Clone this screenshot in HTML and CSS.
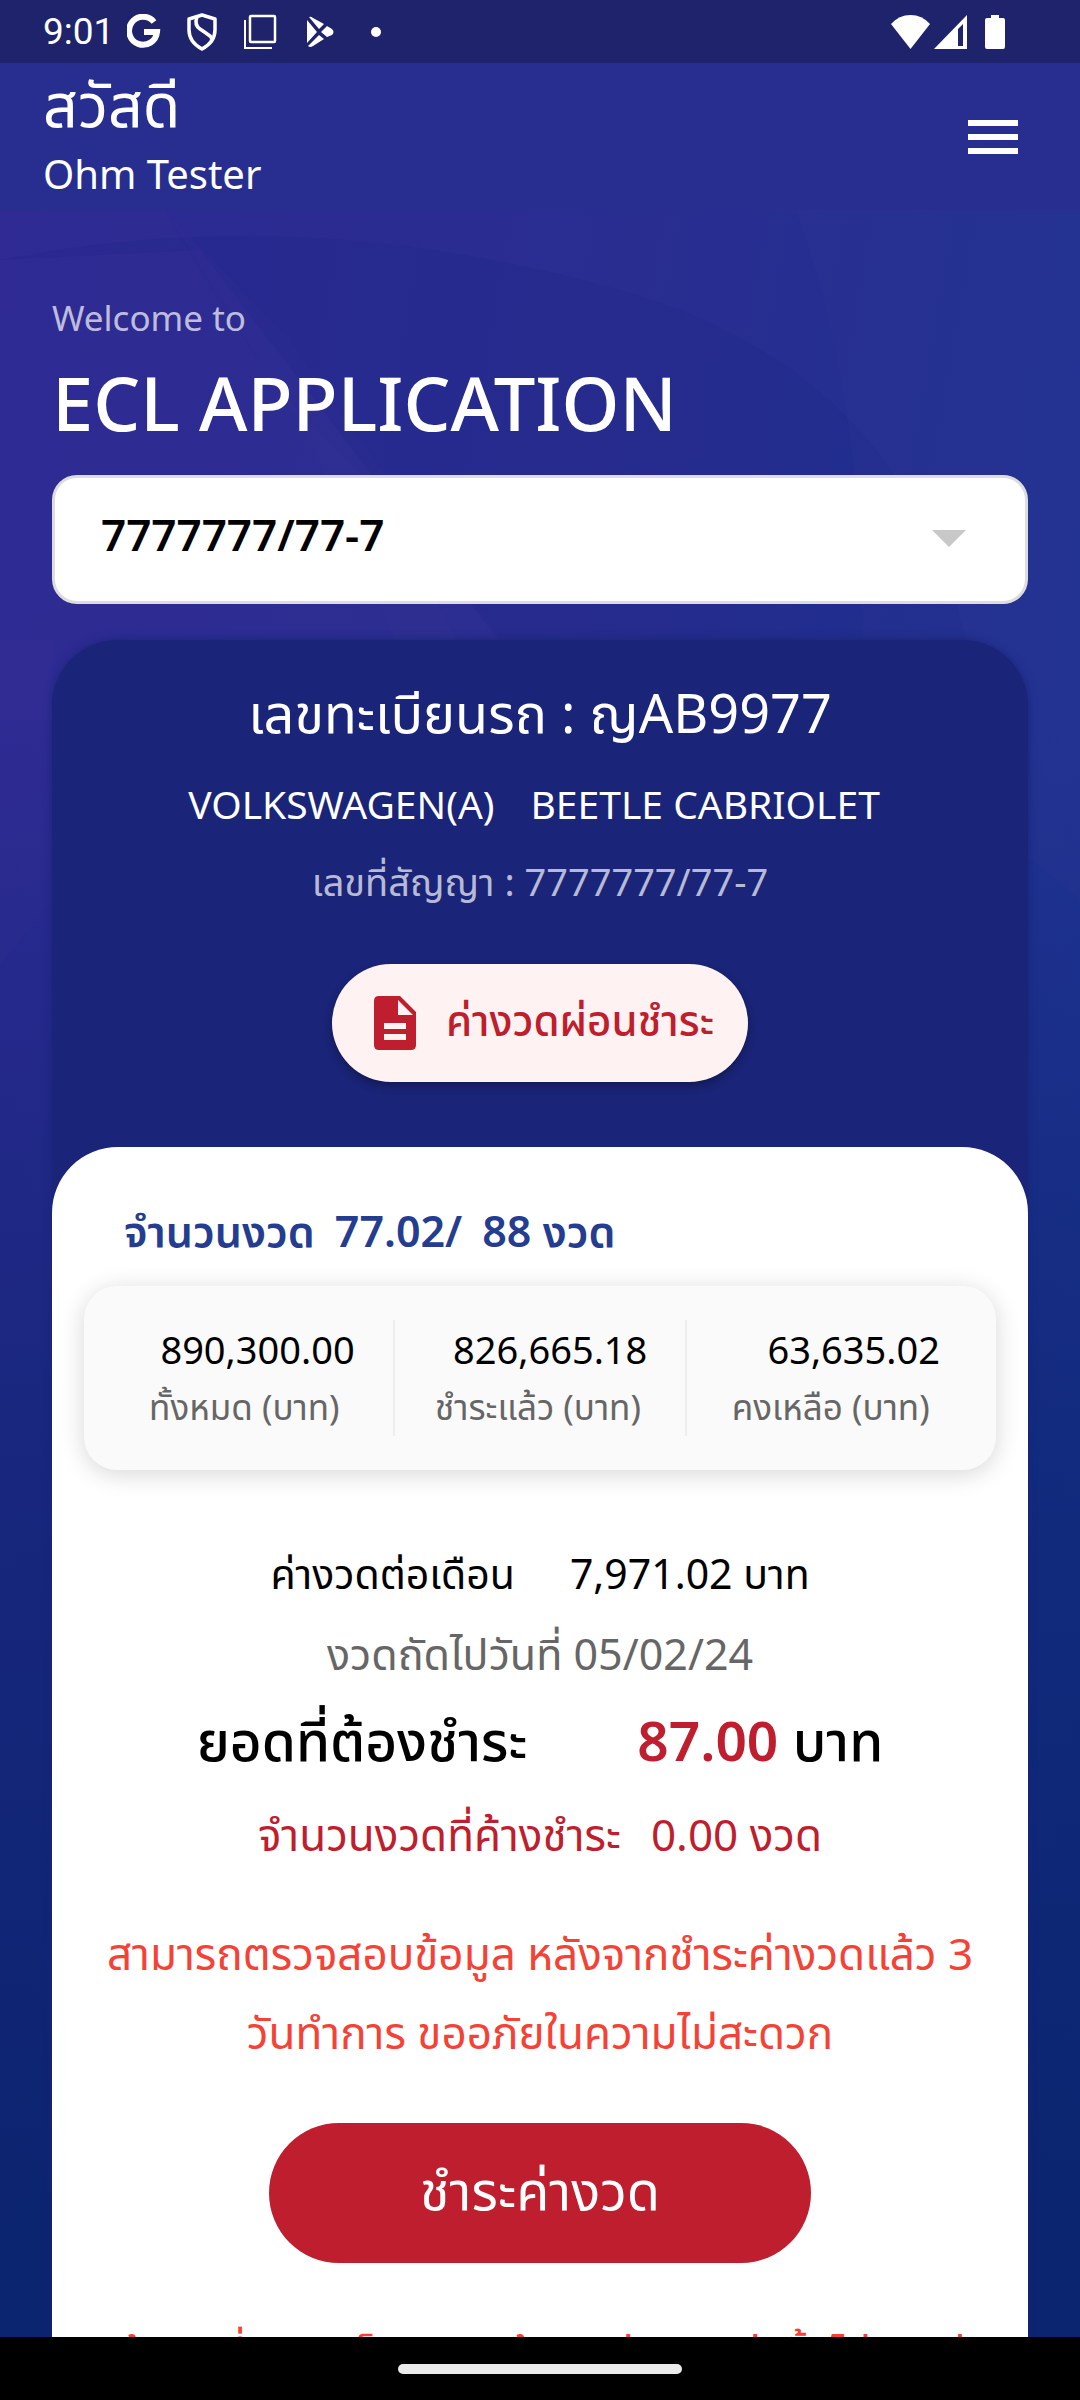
FILE: index.html
```html
<!DOCTYPE html>
<html lang="th">
<head>
<meta charset="utf-8">
<meta name="viewport" content="width=device-width, initial-scale=1">
<title>ECL Application</title>
<link rel="stylesheet" href="styles.css">
</head>
<body>
<div class="app">
  <svg class="backdrop" viewBox="0 0 1080 2400" preserveAspectRatio="none" aria-hidden="true">
    <path class="ray ray-light" d="M165 210 290 340 560 720H430L310 440Z"/>
    <path class="ray ray-light" d="M165 210Q270 400 370 480L500 720H0V210Z"/>
    <path class="ray ray-dark" d="M0 260Q300 200 620 290T980 720H560L200 250Z"/>
    <path class="ray ray-light" d="M795 210Q870 400 862 720L1080 900V210Z"/>
    <path class="ray ray-light" d="M0 640H52V900L0 965Z"/>
  </svg>

  <div class="status">
    <span class="clock">9:01</span>
    <svg class="google" viewBox="0 0 34 36" aria-hidden="true"><path d="M27 8A14 14 0 1 0 30 18H17" fill="none" stroke="#fff" stroke-width="6"/></svg>
    <svg class="shield" viewBox="0 0 30 38" aria-hidden="true"><path d="M15 2 28 6V17Q28 29 15 36 2 29 2 17V6ZM10 4Q7 12 13 16T23 23 22 31" fill="none" stroke="#fff" stroke-width="3.500" stroke-linejoin="round"/></svg>
    <svg class="layers" viewBox="0 0 34 36" aria-hidden="true"><rect x="7" y="2" width="25" height="26" rx="1" fill="none" stroke="#fff" stroke-width="2.500"/><path d="M2 6V34H29" fill="none" stroke="#fff" stroke-width="2"/></svg>
    <svg class="play" viewBox="0 0 28 32" aria-hidden="true"><path d="M1 4 11 16 1 27ZM3 1Q5 0 7 2L18 8 13 13ZM21 10 26 13Q29 16 26 19L21 21 15 16ZM13 19 18 23 7 30Q4 32 2 30Z" fill="#fff"/></svg>
    <svg class="dot" viewBox="0 0 10 10" aria-hidden="true"><circle cx="5" cy="5" r="5" fill="#fff"/></svg>
    <svg class="wifi" viewBox="0 0 39 34" aria-hidden="true"><path d="M0 9Q8 0 19.500 0T39 9L19.500 34Z" fill="#fff"/></svg>
    <svg class="signal" viewBox="0 0 33 34" aria-hidden="true"><path d="M33 0V34H0ZM24 14V31H29V9Z" fill="#fff" fill-rule="evenodd"/></svg>
    <svg class="battery" viewBox="0 0 20 34" aria-hidden="true"><path d="M6 0H14V3H18Q20 3 20 5V32Q20 34 18 34H2Q0 34 0 32V5Q0 3 2 3H6Z" fill="#fff"/></svg>
  </div>

  <header class="header">
    <div class="greeting">
      <p class="hello">สวัสดี</p>
      <p class="user">Ohm Tester</p>
    </div>
    <button class="menu" type="button" aria-label="เมนู">
      <svg viewBox="0 0 50 36" aria-hidden="true"><path d="M0 1H50V7H0ZM0 15H50V21H0ZM0 29H50V35H0Z" fill="#fff"/></svg>
    </button>
  </header>

  <main class="main">
    <p class="welcome">Welcome to</p>
    <h1 class="title">ECL APPLICATION</h1>
    <div class="picker">
      <select class="contract" aria-label="เลขที่สัญญา"><option>7777777/77-7</option></select>
      <svg class="caret" viewBox="0 0 34 17" aria-hidden="true"><path d="M0 0H34L17 17Z" fill="#c8c8c8"/></svg>
    </div>

    <section class="card">
      <div class="vehicle">
        <h2 class="plate">เลขทะเบียนรถ : ญAB9977</h2>
        <p class="model"><span>VOLKSWAGEN(A)</span><span>BEETLE CABRIOLET</span></p>
        <p class="number">เลขที่สัญญา : 7777777/77-7</p>
        <button class="installments" type="button">
          <svg viewBox="0 0 42 54" aria-hidden="true"><path d="M5 0H26L42 16V49Q42 54 37 54H5Q0 54 0 49V5Q0 0 5 0ZM24 4V19H39ZM10 27V33H32V27ZM10 38V44H32V38Z" fill="#be1e2d" fill-rule="evenodd"/></svg>
          <span>ค่างวดผ่อนชำระ</span>
        </button>
      </div>

      <div class="sheet">
        <h3 class="progress"><span>จำนวนงวด</span><span>77.02/</span><span>88 งวด</span></h3>
        <dl class="stats">
          <div class="stat"><dt>ทั้งหมด (บาท)</dt><dd>890,300.00</dd></div>
          <div class="stat"><dt>ชำระแล้ว (บาท)</dt><dd>826,665.18</dd></div>
          <div class="stat"><dt>คงเหลือ (บาท)</dt><dd>63,635.02</dd></div>
        </dl>
        <p class="row monthly"><span>ค่างวดต่อเดือน</span><span>7,971.02 บาท</span></p>
        <p class="row next">งวดถัดไปวันที่ 05/02/24</p>
        <p class="row due"><span>ยอดที่ต้องชำระ</span><span><b>87.00</b> บาท</span></p>
        <p class="row overdue"><span>จำนวนงวดที่ค้างชำระ</span><span>0.00 งวด</span></p>
        <p class="notice">สามารถตรวจสอบข้อมูล หลังจากชำระค่างวดแล้ว 3<br>วันทำการ ขออภัยในความไม่สะดวก</p>
        <button class="pay" type="button">ชำระค่างวด</button>
        <p class="footnote">*ข้อมูลที่แสดงเป็นเฉพาะข้อมูลค่างวดเท่านั้นไม่รวมค่า</p>
      </div>
    </section>
  </main>

  <div class="navbar"><div class="pill"></div></div>
</div>
</body>
</html>
```
FILE: styles.css
```css
* { box-sizing: border-box; }
body, p, h1, h2, h3, dl, dd { margin: 0; }
body {
  font-family: "Noto Sans", "Noto Sans Thai", sans-serif;
  color: #000;
}
button, select { font: inherit; border: 0; }
svg { display: block; flex: none; }
.app {
  position: relative;
  isolation: isolate;
  display: flex;
  flex-direction: column;
  height: 100vh;
  overflow: hidden;
  background:
    linear-gradient(to bottom, transparent 30%, rgba(10, 36, 110, .6) 62%, rgba(10, 36, 110, .95) 92%),
    linear-gradient(100deg, #2d2994 0%, #292d90 45%, #1a3593 100%);
}
.backdrop { position: absolute; inset: 0; width: 100%; height: 100%; z-index: -1; }
.ray-light { fill: rgba(80, 70, 150, .06); }
.ray-dark { fill: rgba(16, 36, 120, .12); }

.status {
  display: flex;
  align-items: center;
  flex: none;
  height: 63px;
  padding: 0 75px 0 43px;
  background: #1e236b;
  color: #fff;
  font: 37px/48px Roboto, sans-serif;
}
.clock { width: 84px; }
.google { width: 34px; height: 36px; }
.shield { width: 30px; height: 38px; margin-left: 26px; }
.layers { width: 34px; height: 36px; margin-left: 26px; }
.play { width: 28px; height: 32px; margin-left: 29px; }
.dot { width: 10px; height: 10px; margin-left: 37px; }
.wifi { width: 39px; height: 34px; margin-left: auto; }
.signal { width: 33px; height: 34px; margin-left: 4px; }
.battery { width: 20px; height: 34px; margin-left: 18px; }

.header {
  display: flex;
  align-items: center;
  justify-content: space-between;
  flex: none;
  height: 147px;
  padding: 0 62px 0 43px;
  background: #272e8f;
  color: #fff;
}
.greeting { display: grid; gap: 6px; }
.hello { font-size: 61px; line-height: 68px; }
.user { font-size: 40px; line-height: 60px; }
.menu { padding: 0; background: none; }
.menu svg { width: 50px; height: 36px; }

.main { flex: 1; min-height: 0; overflow: hidden; padding: 80px 52px 0; }
.welcome { font-size: 35px; line-height: 56px; color: rgba(255, 255, 255, .7); }
.title { font-size: 74px; line-height: 100px; font-weight: 500; color: #fff; padding-top: 7px; }
.picker { position: relative; margin-top: 22px; }
.contract {
  display: block;
  width: 100%;
  height: 129px;
  padding: 0 100px 12px 46px;
  appearance: none;
  border: 3px solid #ddd;
  border-radius: 25px;
  background: #fff;
  color: #000;
  font-size: 44px;
  font-weight: 600;
}
.caret { position: absolute; right: 62px; top: 55px; width: 34px; height: 17px; pointer-events: none; }

.card {
  margin-top: 36px;
  border-radius: 66px 66px 0 0;
  background: #1a2478;
  box-shadow: 0 0 8px #1a2478;
}
.vehicle {
  display: flex;
  flex-direction: column;
  align-items: center;
  height: 507px;
  padding-top: 30px;
  color: #fff;
}
.plate { font-size: 54px; line-height: 84px; font-weight: 400; }
.model { display: flex; gap: 36px; padding: 15px 12px 0 0; font-size: 39px; line-height: 70px; }
.number { padding-top: 7px; font-size: 38px; line-height: 70px; color: rgba(255, 255, 255, .7); }
.installments {
  display: flex;
  align-items: center;
  justify-content: center;
  gap: 30px;
  width: 416px;
  height: 118px;
  margin-top: 48px;
  padding: 0 0 0 8px;
  border-radius: 59px;
  background: #fff2f2;
  color: #be1e2d;
  font-size: 42px;
  font-weight: 500;
  box-shadow: 0 4px 8px rgba(0, 0, 0, .3);
}
.installments svg { width: 42px; height: 54px; }

.sheet {
  padding: 48px 32px 0;
  border-radius: 66px 66px 0 0;
  background: #fff;
  text-align: center;
}
.progress {
  display: flex;
  gap: 20px;
  padding-left: 40px;
  font-size: 43px;
  line-height: 72px;
  font-weight: 600;
  color: #243d90;
}
.stats {
  display: grid;
  grid-template-columns: repeat(3, 1fr);
  height: 184px;
  margin-top: 19px;
  padding: 34px 18px 34px 16px;
  border-radius: 33px;
  background: #fafafa;
  box-shadow: 0 4px 24px rgba(0, 0, 0, .16);
}
.stat {
  display: flex;
  flex-direction: column-reverse;
  justify-content: center;
  padding: 0 38px 0 34px;
}
.stat + .stat { border-left: 2px solid #eee; }
.stat dt { font-size: 35px; line-height: 58px; color: #666; text-align: center; white-space: nowrap; }
.stat dd { font-size: 38px; line-height: 58px; text-align: right; }
.row { display: flex; justify-content: center; font-size: 43px; line-height: 80px; }
.monthly { gap: 55px; padding-top: 63px; font-size: 41px; }
.next { padding-top: 1px; color: #666; }
.due { gap: 110px; padding-top: 6px; font-size: 55px; font-weight: 500; }
.due b { font-weight: 600; color: #be1e2d; }
.overdue { gap: 30px; padding-top: 14px; font-size: 44px; color: #be1e2d; }
.notice { padding-top: 40px; font-size: 44px; line-height: 79px; color: #f44336; }
.pay {
  display: block;
  width: 542px;
  height: 140px;
  margin: 51px auto 0;
  border-radius: 70px;
  background: #be1e2d;
  color: #fff;
  font-size: 54px;
}
.footnote { padding-top: 51px; font-size: 43px; line-height: 79px; color: #f44336; white-space: nowrap; }

.navbar { display: grid; place-items: center; flex: none; height: 63px; background: #000; }
.pill { width: 284px; height: 10px; border-radius: 5px; background: #ebebeb; }
```
